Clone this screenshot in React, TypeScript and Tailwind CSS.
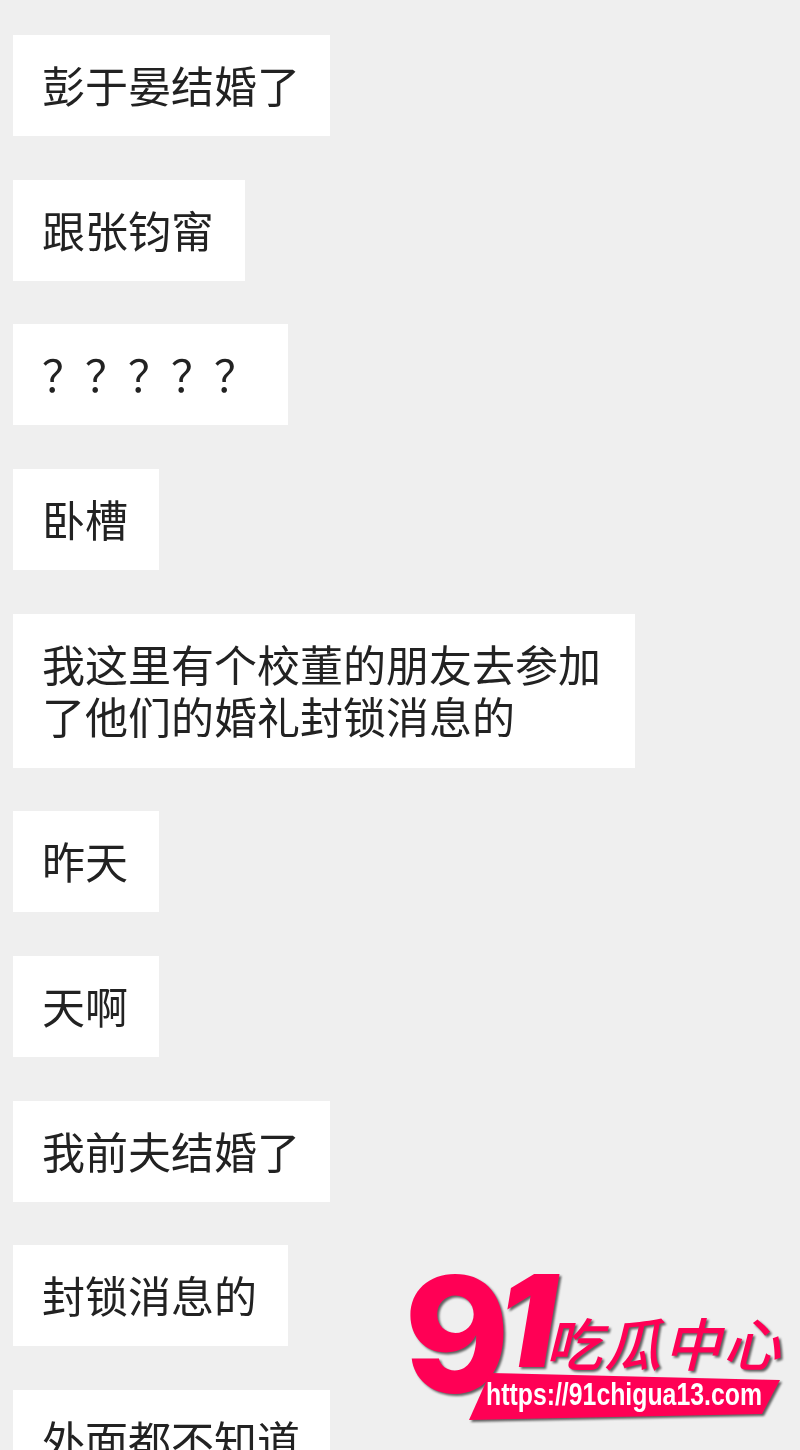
const messages: { lines: string[]; width: string; gap: string }[] = [
  { lines: ["彭于晏结婚了"], width: "w-[317px]", gap: "mb-[44px]" },
  { lines: ["跟张钧甯"], width: "w-[232px]", gap: "mb-[43px]" },
  { lines: ["？？？？？"], width: "w-[275px]", gap: "mb-[44px]" },
  { lines: ["卧槽"], width: "w-[146px]", gap: "mb-[44px]" },
  { lines: ["我这里有个校董的朋友去参加", "了他们的婚礼封锁消息的"], width: "w-[622px]", gap: "mb-[43px]" },
  { lines: ["昨天"], width: "w-[146px]", gap: "mb-[44px]" },
  { lines: ["天啊"], width: "w-[146px]", gap: "mb-[44px]" },
  { lines: ["我前夫结婚了"], width: "w-[317px]", gap: "mb-[43px]" },
  { lines: ["封锁消息的"], width: "w-[275px]", gap: "mb-[44px]" },
  { lines: ["外面都不知道"], width: "w-[317px]", gap: "mb-0" },
];

function Bubble({ lines, width, gap }: { lines: string[]; width: string; gap: string }) {
  const height = lines.length > 1 ? "h-[154px]" : "h-[101px]";
  return (
    <div className={`${width} ${height} ${gap} flex flex-col justify-center bg-white pb-[4px] pl-[29px] blur-[0.7px]`}>
      {lines.map((line) => (
        <div key={line} className="h-[52px] whitespace-nowrap text-[43px] leading-[52px] text-[#222222]">
          {line}
        </div>
      ))}
    </div>
  );
}

function Logo() {
  return (
    <svg
      className="absolute left-[390px] top-[1250px] drop-shadow-[2px_2px_1px_rgba(0,0,0,0.6)]"
      width="410"
      height="200"
      viewBox="0 0 410 200"
    >
      <text
        x="14"
        y="142"
        fontSize="160"
        fontWeight="800"
        fontFamily="Inter, 'Liberation Sans', sans-serif"
        fill="#ff0055"
      >
        9
      </text>
      <text
        x="108"
        y="117"
        fontSize="128"
        fontWeight="900"
        fontStyle="italic"
        fontFamily="Inter, 'Liberation Sans', sans-serif"
        fill="#ff0055"
      >
        1
      </text>
      <text
        x="155"
        y="116"
        fontSize="57"
        fontWeight="500"
        fontStyle="italic"
        fontFamily="'Noto Sans CJK SC', sans-serif"
        fill="#ff0055"
        textLength="235"
      >
        吃瓜中心
      </text>
      <polygon points="100,123 390,130 372,164 79,170" fill="#ff0055" />
      <text
        x="96"
        y="155"
        fontSize="31"
        fontWeight="700"
        fontFamily="'Liberation Sans', sans-serif"
        fill="#ffffff"
        textLength="276"
        lengthAdjust="spacingAndGlyphs"
      >
        https://91chigua13.com
      </text>
    </svg>
  );
}

export default function App() {
  return (
    <div className="relative h-[1450px] w-[800px] overflow-hidden bg-[#efefef] font-['Noto_Sans_CJK_SC',sans-serif]">
      <div className="flex flex-col items-start pl-[13px] pt-[35px]">
        {messages.map((m) => (
          <Bubble key={m.lines[0]} {...m} />
        ))}
      </div>
      <Logo />
    </div>
  );
}
